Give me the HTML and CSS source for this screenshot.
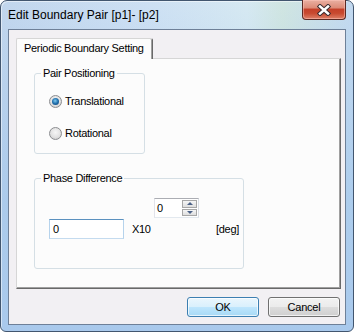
FILE: index.html
```html
<!DOCTYPE html>
<html lang="en">
<head>
    <meta charset="UTF-8">
    <title>Edit Boundary Pair</title>
    <link rel="stylesheet" href="styles.css">
</head>
<body>
    <div class="window">
        <!-- Title bar -->
        <div class="titlebar">
            <span class="title">Edit Boundary Pair [p1]- [p2]</span>
            <div class="close-btn">
                <svg width="14" height="12" viewBox="0 0 14 12">
                    <path d="M3 2.5 L11 9.5 M11 2.5 L3 9.5" stroke="#3a2b2e" stroke-width="4.5" stroke-linecap="square" fill="none"/>
                    <path d="M3 2.5 L11 9.5 M11 2.5 L3 9.5" stroke="#fff" stroke-width="2.5" stroke-linecap="square" fill="none"/>
                </svg>
            </div>
        </div>

        <div class="client">
            <div class="tabs">
                <div class="tab">Periodic Boundary Setting</div>
            </div>
            <div class="panel">
                <!-- Pair Positioning -->
                <fieldset class="group group-pos">
                    <legend>Pair Positioning</legend>
                    <div class="group-body">
                        <div class="radio-row"><span class="radio checked"></span>Translational</div>
                        <div class="radio-row"><span class="radio"></span>Rotational</div>
                    </div>
                </fieldset>

                <!-- Phase Difference -->
                <fieldset class="group group-phase">
                    <legend>Phase Difference</legend>
                    <div class="group-body">
                        <div class="spinner">
                            <span class="spin-val">0</span>
                            <div class="spin-btns">
                                <span class="spin-btn"><i class="arrow-up"></i></span>
                                <span class="spin-btn"><i class="arrow-down"></i></span>
                            </div>
                        </div>
                        <div class="phase-row">
                            <div class="textbox">0</div>
                            <span class="x10">X10</span>
                            <span class="deg">[deg]</span>
                        </div>
                    </div>
                </fieldset>
            </div>
            <div class="buttons">
                <button class="btn btn-default">OK</button>
                <button class="btn">Cancel</button>
            </div>
        </div>
    </div>
</body>
</html>
```

FILE: styles.css
```css
* {
    box-sizing: border-box;
}
body {
    margin: 0;
    width: 354px;
    height: 332px;
    overflow: hidden;
    font-family: "Liberation Sans", Arial, sans-serif;
    font-size: 11px;
    letter-spacing: -0.3px;
    color: #000;
    background: #fff;
}
.window {
    width: 354px;
    height: 332px;
    border: 1px solid #42566f;
    border-radius: 7px 7px 6px 6px;
    padding: 0 7px 6px;
    background:
        linear-gradient(rgba(255, 255, 255, 0.15), rgba(160, 198, 236, 0.5) 60%, #a9c9ec),
        linear-gradient(to right, #b7cfea 0%, #c4daf1 40%, #cfe5f0 70%, #c8e1dc 80%, #b9d3ee 100%);
    box-shadow: inset 1px 1px 0 rgba(255, 255, 255, 0.5);
}

/* Title bar */
.titlebar {
    height: 28px;
    display: flex;
    justify-content: space-between;
    align-items: flex-start;
}
.title {
    font-size: 12px;
    line-height: 16px;
    letter-spacing: 0;
    padding-top: 6px;
}
.close-btn {
    width: 44px;
    height: 20px;
    margin-top: -1px;
    border: 1px solid #5b2a24;
    border-top: none;
    border-radius: 0 0 4px 4px;
    background: linear-gradient(#eab0a2 0%, #dd8c79 40%, #c5412a 50%, #c84a30 70%, #de8068 100%);
    box-shadow: inset 0 0 0 1px rgba(255, 200, 190, 0.5);
    display: flex;
    align-items: center;
    justify-content: center;
}
.close-btn svg {
    display: block;
}

/* Client area */
.client {
    height: 296px;
    border: 1px solid #6e8098;
    background: #f2f0f3;
    padding: 8px 0 0 7px;
}
.tabs {
    display: flex;
}
.tab {
    position: relative;
    z-index: 1;
    width: 137px;
    height: 21px;
    margin-bottom: -1px;
    padding-left: 7px;
    line-height: 19px;
    background: #fcfcfc;
    border: 1px solid #d6d6d6;
    border-right-color: #696969;
    border-bottom: none;
    border-radius: 2px 2px 0 0;
    box-shadow: inset -1px 0 0 #a0a0a0;
}
.panel {
    width: 325px;
    height: 231px;
    padding: 8px 0 0 17px;
    background: #fcfcfc;
    border: 1px solid;
    border-color: #d6d6d6 #696969 #696969 #d6d6d6;
    box-shadow: inset -1px -1px 0 #a0a0a0;
}

/* Group boxes */
.group {
    margin: 0;
    padding: 0;
    min-width: 0;
    border: 1px solid #d5dfe5;
    border-radius: 3px;
}
.group legend {
    margin-left: 6px;
    padding: 0 2px;
    line-height: 13px;
}
.group-pos {
    width: 111px;
}
.group-pos .group-body {
    padding: 13px 0 12px 14px;
}
.group-phase {
    width: 210px;
    margin-top: 18px;
}
.group-phase .group-body {
    padding: 13px 4px 29px 14px;
}

/* Radios */
.radio-row {
    height: 16px;
    display: flex;
    align-items: center;
}
.radio-row + .radio-row {
    margin-top: 16px;
}
.radio {
    width: 13px;
    height: 13px;
    margin-right: 3px;
    border: 1px solid #8b8d90;
    border-radius: 50%;
    background: radial-gradient(circle at 50% 40%, #f6f6f6 0%, #e2e2e2 55%, #c4c4c4 100%);
    display: flex;
    align-items: center;
    justify-content: center;
}
.radio.checked::after {
    content: "";
    width: 7px;
    height: 7px;
    border-radius: 50%;
    background: radial-gradient(circle at 45% 40%, #7fcaf0 0%, #1f6eab 50%, #0f3f70 100%);
}

/* Spinner */
.spinner {
    width: 45px;
    height: 20px;
    margin-left: 105px;
    display: flex;
    background: #fff;
    border: 1px solid;
    border-color: #abadb3 #dbdfe6 #e3e9ef #e2e3ea;
}
.spin-val {
    flex: 1;
    padding-left: 2px;
    line-height: 18px;
}
.spin-btns {
    width: 16px;
    padding: 1px 1px 1px 0;
    display: flex;
    flex-direction: column;
    gap: 1px;
}
.spin-btn {
    flex: 1;
    border: 1px solid #a7a7a7;
    background: linear-gradient(#f6f6f6, #dedede);
    display: flex;
    align-items: center;
    justify-content: center;
}
.arrow-up, .arrow-down {
    width: 0;
    height: 0;
    border-left: 3px solid transparent;
    border-right: 3px solid transparent;
}
.arrow-up {
    border-bottom: 3px solid #4c6287;
}
.arrow-down {
    border-top: 3px solid #4c6287;
}

/* Phase row */
.phase-row {
    margin-top: 1px;
    display: flex;
    align-items: center;
}
.textbox {
    width: 75px;
    height: 20px;
    padding-left: 3px;
    line-height: 18px;
    background: #fff;
    border: 1px solid;
    border-color: #5b91bf #b6d3ec #c4dbef #b6d3ec;
}
.x10 {
    margin-left: 8px;
}
.deg {
    margin-left: auto;
}

/* Buttons */
.buttons {
    display: flex;
    justify-content: flex-end;
    gap: 9px;
    margin-top: 8px;
    padding-right: 5px;
}
.btn {
    width: 72px;
    height: 20px;
    padding: 0;
    font: inherit;
    letter-spacing: -0.2px;
    color: #000;
    border: 1px solid #707070;
    border-radius: 3px;
    background: linear-gradient(#f2f2f2 0%, #ebebeb 50%, #dddddd 50%, #cfcfcf 100%);
    box-shadow: inset 0 0 0 1px rgba(255, 255, 255, 0.7);
}
.btn-default {
    border-color: #3c7fb1;
    background: linear-gradient(#eaf6fd 0%, #d9f0fc 50%, #bee6fd 50%, #a7d9f5 100%);
}
```
